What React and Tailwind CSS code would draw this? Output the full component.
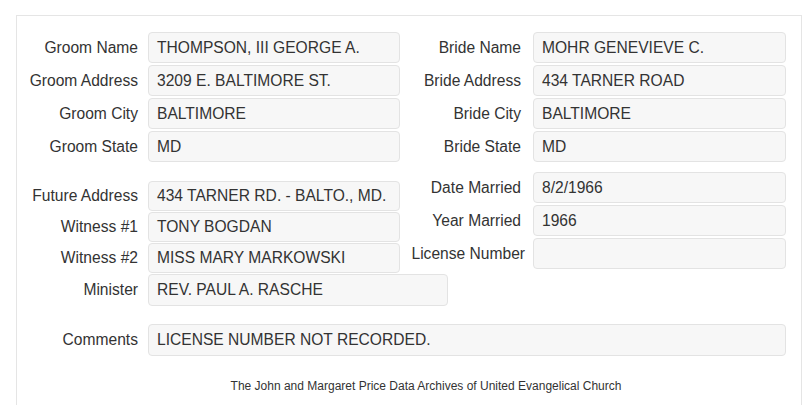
import React from 'react';

const leftTop = [
  ['Groom Name', 'THOMPSON, III GEORGE A.'],
  ['Groom Address', '3209 E. BALTIMORE ST.'],
  ['Groom City', 'BALTIMORE'],
  ['Groom State', 'MD'],
];

const rightTop = [
  ['Bride Name', 'MOHR GENEVIEVE C.'],
  ['Bride Address', '434 TARNER ROAD'],
  ['Bride City', 'BALTIMORE'],
  ['Bride State', 'MD'],
];

const leftBottom = [
  ['Future Address', '434 TARNER RD. - BALTO., MD.'],
  ['Witness #1', 'TONY BOGDAN'],
  ['Witness #2', 'MISS MARY MARKOWSKI'],
];

const rightBottom = [
  ['Date Married', '8/2/1966'],
  ['Year Married', '1966'],
  ['License Number', ''],
];

function Box({ value, className = 'w-[252px] h-[31px]' }) {
  return (
    <div className={`flex shrink-0 items-center rounded-[4px] border border-[#e3e3e3] bg-[#f7f7f7] pl-[8px] whitespace-nowrap ${className}`}>
      {value}
    </div>
  );
}

function Row({ label, value, labelClass, boxClass }) {
  return (
    <div className="flex items-center">
      <div className={`flex shrink-0 justify-end whitespace-nowrap ${labelClass}`}>{label}</div>
      <Box value={value} className={boxClass} />
    </div>
  );
}

export default function App() {
  return (
    <div className="min-h-screen bg-white pt-[15px] pl-[16px] font-['Liberation_Sans',Arial,sans-serif] text-[15.6px] text-[#333]">
      <div className="w-[786px] min-h-[420px] border border-b-0 border-[#e5e5e5] pt-[16px]">
        <div className="flex items-start">
          {/* groom side */}
          <div className="flex w-[383px] shrink-0 flex-col">
            <div className="flex flex-col gap-[2px]">
              {leftTop.map(([l, v]) => (
                <Row key={l} label={l} value={v} labelClass="w-[121px] mr-[10px]" boxClass="w-[252px] h-[31px]" />
              ))}
            </div>
            <div className="mt-[19px] flex flex-col gap-[1px]">
              {leftBottom.map(([l, v]) => (
                <Row key={l} label={l} value={v} labelClass="w-[121px] mr-[10px]" boxClass="w-[252px] h-[30px]" />
              ))}
              <Row label="Minister" value="REV. PAUL A. RASCHE" labelClass="w-[121px] mr-[10px]" boxClass="w-[300px] h-[32px]" />
            </div>
          </div>

          {/* bride side */}
          <div className="flex flex-col">
            <div className="flex flex-col gap-[2px]">
              {rightTop.map(([l, v]) => (
                <Row key={l} label={l} value={v} labelClass="w-[121px] mr-[12px]" boxClass="w-[253px] h-[31px]" />
              ))}
            </div>
            <div className="mt-[10px] flex flex-col gap-[2px]">
              {rightBottom.map(([l, v]) => (
                <Row
                  key={l}
                  label={l}
                  value={v}
                  labelClass={l === 'License Number' ? 'w-[121px] mr-[12px] translate-x-[4px]' : 'w-[121px] mr-[12px]'}
                  boxClass="w-[253px] h-[31px]"
                />
              ))}
            </div>
          </div>
        </div>

        <div className="mt-[18px]">
          <Row label="Comments" value="LICENSE NUMBER NOT RECORDED." labelClass="w-[121px] mr-[10px]" boxClass="w-[638px] h-[32px]" />
        </div>

        <p className="mt-[21px] pl-[34px] text-center text-[12px]">
          The John and Margaret Price Data Archives of United Evangelical Church
        </p>
      </div>
    </div>
  );
}
